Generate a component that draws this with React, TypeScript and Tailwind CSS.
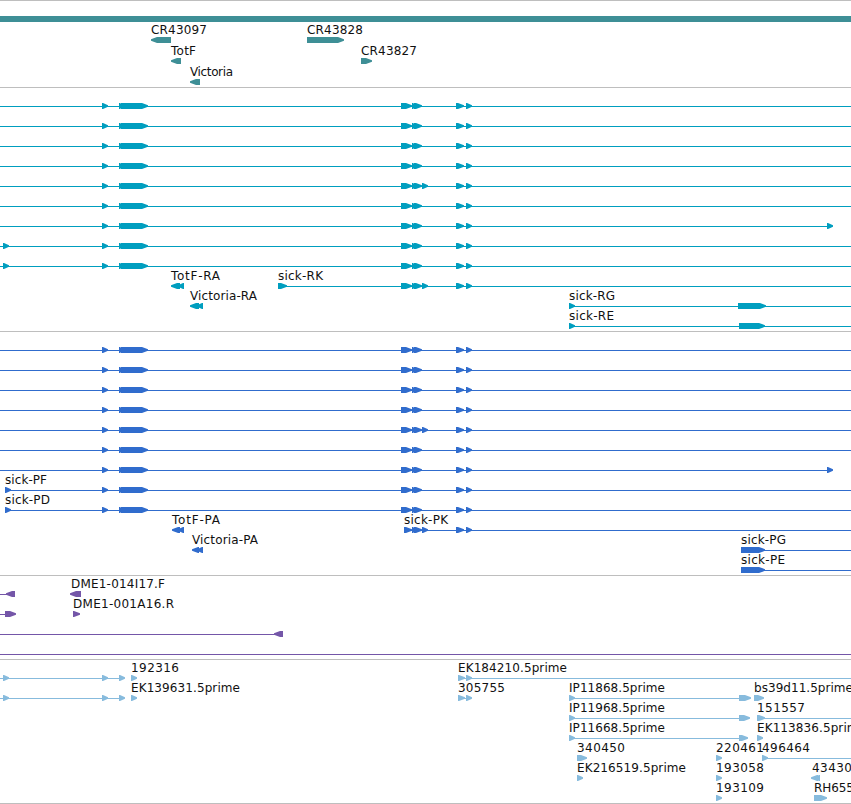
type Dir = "l" | "r";
type Feature = [from: number, to: number, dir?: Dir];
type Label = [x: number, width: number, text: string];

interface Row {
  lines?: [number, number][];
  features?: Feature[];
  labels?: Label[];
}

interface Track {
  id: string;
  color: string;
  rowClass: string;
  rowHeight: number;
  rows: Row[];
}

const WIDTH = 851;
const HEAD = 6;

const leftExons: Feature[] = [[102, 108], [119, 123], [121, 148]];
const midExons: Feature[] = [[401, 412], [412, 416], [414, 422], [456, 464], [466, 472]];
const extraExon: Feature = [422, 428];

const sick: Row = { lines: [[0, WIDTH]], features: [...leftExons, ...midExons] };
const sickExtra: Row = { lines: [[0, WIDTH]], features: [...leftExons, ...midExons, extraExon] };
const sickShort: Row = { lines: [[0, 830]], features: [...leftExons, ...midExons, [827, 833]] };
const sickEarly: Row = { lines: [[0, WIDTH]], features: [[3, 9], ...leftExons, ...midExons] };

const tracks: Track[] = [
  {
    id: "genes",
    color: "#3e8f96",
    rowClass: "pt-0.5",
    rowHeight: 21,
    rows: [
      {},
      {
        features: [[151, 171, "l"], [307, 344]],
        labels: [[151, 56, "CR43097"], [307, 56, "CR43828"]],
      },
      {
        features: [[171, 181, "l"], [361, 372]],
        labels: [[171, 25, "TotF"], [361, 56, "CR43827"]],
      },
      { features: [[190, 200, "l"]], labels: [[190, 43, "Victoria"]] },
    ],
  },
  {
    id: "transcripts",
    color: "#009ebf",
    rowClass: "pt-[3px]",
    rowHeight: 20,
    rows: [
      sick,
      sick,
      sick,
      sick,
      sickExtra,
      sick,
      sickShort,
      sickEarly,
      sickEarly,
      {
        lines: [[278, WIDTH]],
        features: [[171, 180, "l"], [178, 184, "l"], [278, 287], ...midExons, extraExon],
        labels: [[171, 49, "TotF-RA"], [278, 45, "sick-RK"]],
      },
      {
        lines: [[569, WIDTH]],
        features: [[190, 199, "l"], [197, 203, "l"], [569, 575], [738, 766]],
        labels: [[190, 67, "Victoria-RA"], [569, 46, "sick-RG"]],
      },
      {
        lines: [[569, WIDTH]],
        features: [[569, 575], [739, 765]],
        labels: [[569, 45, "sick-RE"]],
      },
    ],
  },
  {
    id: "proteins",
    color: "#306ccd",
    rowClass: "pt-[3px]",
    rowHeight: 20,
    rows: [
      sick,
      sick,
      sick,
      sick,
      sickExtra,
      sick,
      sickShort,
      {
        lines: [[5, WIDTH]],
        features: [[5, 11], ...leftExons, ...midExons],
        labels: [[5, 42, "sick-PF"]],
      },
      {
        lines: [[5, WIDTH]],
        features: [[5, 11], ...leftExons, ...midExons],
        labels: [[5, 45, "sick-PD"]],
      },
      {
        lines: [[404, WIDTH]],
        features: [[172, 180, "l"], [178, 184, "l"], [404, 412], ...midExons.slice(1), extraExon],
        labels: [[172, 48, "TotF-PA"], [404, 44, "sick-PK"]],
      },
      {
        lines: [[741, WIDTH]],
        features: [[192, 199, "l"], [197, 203, "l"], [741, 765]],
        labels: [[192, 66, "Victoria-PA"], [741, 45, "sick-PG"]],
      },
      {
        lines: [[741, WIDTH]],
        features: [[741, 765]],
        labels: [[741, 44, "sick-PE"]],
      },
    ],
  },
  {
    id: "bac-ends",
    color: "#7456a8",
    rowClass: "pt-[3px]",
    rowHeight: 20,
    rows: [
      {
        lines: [[0, 12]],
        features: [[6, 15, "l"], [70, 81, "l"]],
        labels: [[71, 94, "DME1-014I17.F"]],
      },
      {
        lines: [[0, 12]],
        features: [[5, 16], [73, 80]],
        labels: [[73, 101, "DME1-001A16.R"]],
      },
      { lines: [[0, 280]], features: [[274, 283, "l"]] },
      { lines: [[0, WIDTH]] },
    ],
  },
  {
    id: "ests",
    color: "#87bbdd",
    rowClass: "pt-[3px]",
    rowHeight: 20,
    rows: [
      {
        lines: [[0, 121], [458, WIDTH]],
        features: [[3, 9], [102, 108], [119, 125], [131, 137], [458, 465], [466, 472]],
        labels: [[131, 48, "192316"], [458, 109, "EK184210.5prime"]],
      },
      {
        lines: [[0, 121], [458, 468], [569, 741]],
        features: [
          [3, 9], [102, 108], [119, 125], [131, 137], [458, 465],
          [466, 472], [569, 575], [739, 751], [754, 764],
        ],
        labels: [
          [131, 109, "EK139631.5prime"],
          [458, 47, "305755"],
          [569, 96, "IP11868.5prime"],
          [754, 99, "bs39d11.5prime"],
        ],
      },
      {
        lines: [[569, 741], [757, WIDTH]],
        features: [[569, 575], [739, 750], [757, 765]],
        labels: [[569, 96, "IP11968.5prime"], [757, 48, "151557"]],
      },
      {
        lines: [[569, 741]],
        features: [[569, 575], [739, 748], [757, 763]],
        labels: [[569, 96, "IP11668.5prime"], [757, 109, "EK113836.5prime"]],
      },
      {
        lines: [[762, WIDTH]],
        features: [[577, 587], [716, 722], [762, 768]],
        labels: [[577, 48, "340450"], [716, 48, "220461"], [762, 48, "496464"]],
      },
      {
        features: [[577, 583], [716, 722], [811, 818, "l"], [815, 820, "l"]],
        labels: [[577, 109, "EK216519.5prime"], [716, 48, "193058"], [812, 48, "434305"]],
      },
      {
        features: [[716, 722], [814, 827]],
        labels: [[716, 48, "193109"], [814, 55, "RH65540"]],
      },
    ],
  },
];

// Box with a blunt pointed end; short features are all head.
function arrowPoints(from: number, to: number, top: number, dir: Dir) {
  const head = Math.min(HEAD, to - from - 1);
  const bottom = top + 6;
  const [base, neck, tip] = dir === "l" ? [to, from + head, from] : [from, to - head, to];
  return [
    [base, top],
    [neck, top],
    [tip, top + 2.2],
    [tip, top + 3.8],
    [neck, bottom],
    [base, bottom],
  ].join(" ");
}

function TrackRow({ row, height, color }: { row: Row; height: number; color: string }) {
  const top = height - 8;
  return (
    <svg width={WIDTH} height={height} className="block overflow-visible" fill={color}>
      {row.lines?.map(([from, to]) => (
        <rect key={from} x={from} y={top + 3} width={to - from} height={1} />
      ))}
      {row.features?.map(([from, to, dir = "r"]) => (
        <polygon key={`${from}-${to}`} points={arrowPoints(from, to, top, dir)} />
      ))}
      {row.labels?.map(([x, width, text]) => (
        <text
          key={x}
          x={x}
          y={top - 3}
          textLength={width}
          className="fill-[#111] font-['DejaVu_Sans',sans-serif] text-[12px]"
        >
          {text}
        </text>
      ))}
    </svg>
  );
}

export default function App() {
  return (
    <main className="h-[804px] w-[851px] overflow-hidden border-b border-[#bebebe] bg-white">
      {tracks.map((track) => (
        <section key={track.id} className={`border-t border-[#bebebe] ${track.rowClass}`}>
          {track.rows.map((row, i) =>
            track.id === "genes" && i === 0 ? (
              <div key={i} className="h-[21px] pt-[13px]">
                <div className="h-1.5 bg-[#3e8f96]" />
              </div>
            ) : (
              <TrackRow key={i} row={row} height={track.rowHeight} color={track.color} />
            ),
          )}
        </section>
      ))}
    </main>
  );
}
